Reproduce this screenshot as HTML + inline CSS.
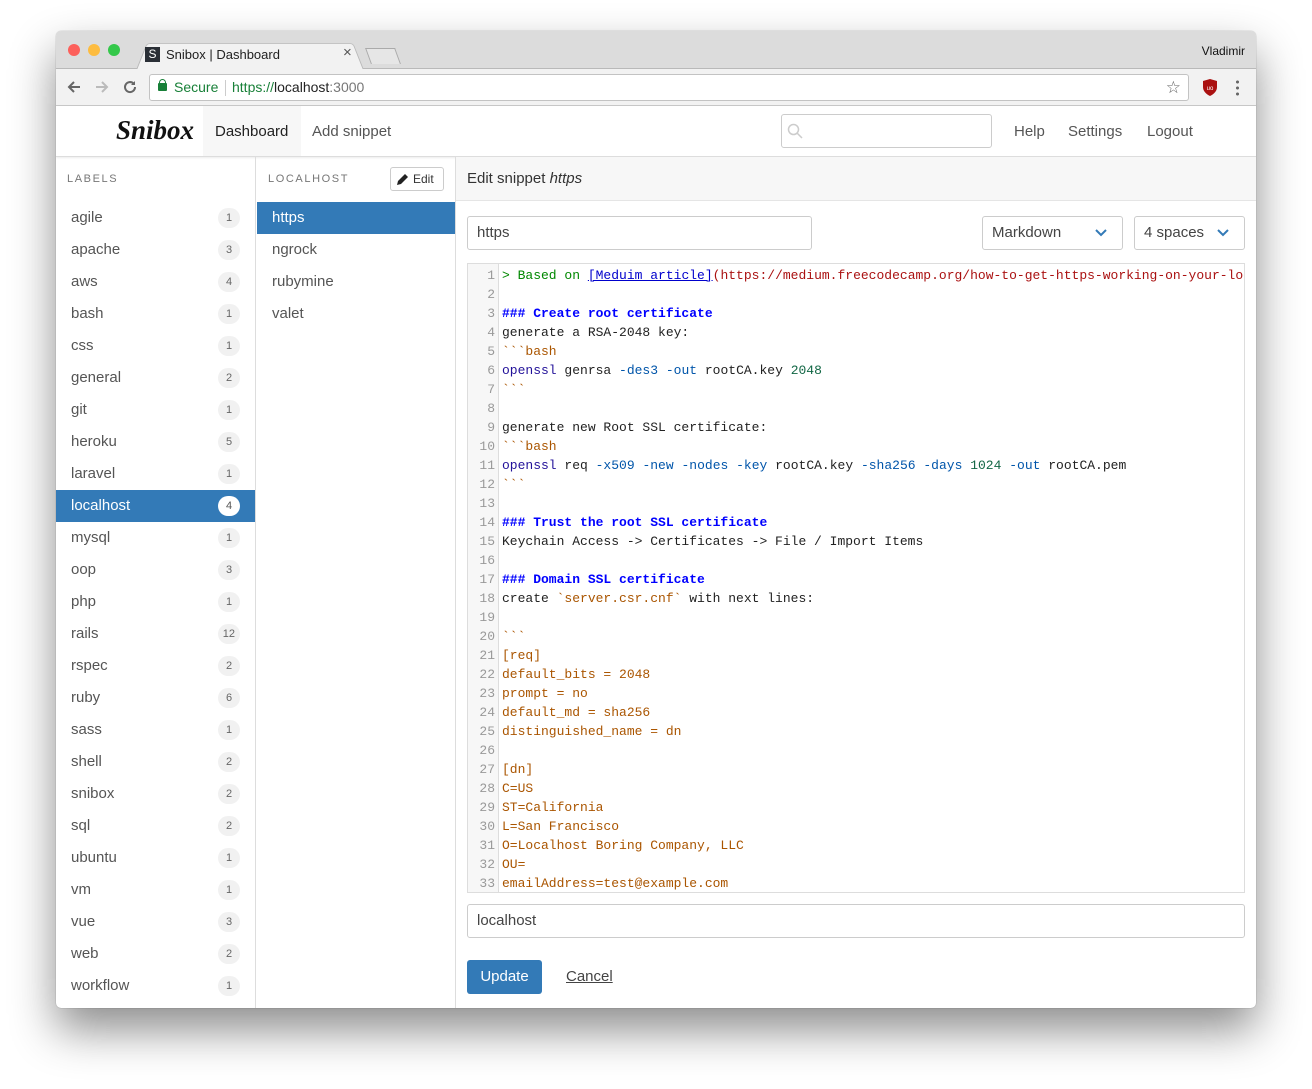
<!DOCTYPE html>
<html><head><meta charset="utf-8">
<style>
*{box-sizing:border-box;margin:0;padding:0}
body{width:1312px;height:1089px;background:#fff;font-family:"Liberation Sans",sans-serif;position:relative;overflow:hidden}
.win{position:absolute;left:56px;top:31px;width:1200px;height:977px;border-radius:5px;overflow:hidden;box-shadow:0 22px 45px rgba(0,0,0,.45),0 0 1px rgba(0,0,0,.4);background:#fff}
.tabbar{position:absolute;left:0;top:0;width:1200px;height:38px;background:#dcdcdc;border-bottom:1px solid #b9b9b9}
.dot{position:absolute;top:13px;width:12px;height:12px;border-radius:50%}
.tab{position:absolute;left:80px;top:9px;width:228px;height:30px;background:#f2f2f2;border:1px solid #b9b9b9;border-bottom:none;border-radius:4px 4px 0 0;transform:perspective(30px) rotateX(6deg);transform-origin:bottom}
.toolbar{position:absolute;left:0;top:38px;width:1200px;height:37px;background:#f2f2f2;border-bottom:1px solid #c8c8c8}
.url{position:absolute;left:93px;top:5px;width:1040px;height:27px;background:#fff;border:1px solid #c3c3c3;border-radius:3px;font-size:14px;line-height:25px}
.nav{position:absolute;left:0;top:75px;width:1200px;height:51px;background:#fff;border-bottom:1px solid #ddd;box-shadow:0 1px 2px rgba(0,0,0,.08)}
.nav a{position:absolute;top:0;line-height:51px;font-size:15px;color:#555;text-decoration:none}
.col1{position:absolute;left:0;top:126px;width:200px;height:851px;border-right:1px solid #ddd}
.col2{position:absolute;left:201px;top:126px;width:199px;height:851px;border-right:1px solid #ddd}
.col3{position:absolute;left:400px;top:126px;width:800px;height:851px}
.hdr{height:45px;font-size:11px;letter-spacing:1.6px;color:#777;line-height:45px;padding-left:11px}
.lab{height:32px;line-height:32px;font-size:15px;color:#555;padding-left:15px;position:relative}
.lab b{position:absolute;right:15px;top:6px;min-width:22px;height:20px;border-radius:10px;background:#f1f1f1;font-weight:normal;font-size:11px;color:#666;text-align:center;line-height:20px;padding:0 5px}
.lab.act{background:#337ab7;color:#fff}
.lab.act b{background:#fff;color:#555}
.sn{height:32px;line-height:32px;font-size:15px;color:#555;padding-left:15px}
.sn.act{background:#337ab7;color:#fff}
.inp{position:absolute;border:1px solid #ccc;border-radius:3px;font-size:15px;color:#444;line-height:32px;padding-left:9px;background:#fff}
.code{position:absolute;left:11px;top:106px;width:778px;height:630px;border:1px solid #ddd;overflow:hidden;background:#fff}
.gut{position:absolute;left:0;top:0;width:31px;height:100%;background:#f7f7f7;border-right:1px solid #ddd}
pre{font-family:"Liberation Mono",monospace;font-size:13px;line-height:19px;position:absolute;top:2px;color:#222;white-space:pre}
.ln{left:0;width:27px;text-align:right;color:#999}
.tx{left:34px}
.q{color:#080}.lk{color:#00c;text-decoration:underline}.ur{color:#a11}.h{color:#00f;font-weight:bold}.s{color:#a50}.k{color:#219}.n{color:#164}.v{color:#05a}
</style></head><body>
<div class="win">
 <div class="tabbar">
  <div class="dot" style="left:12px;background:#fc605b"></div>
  <div class="dot" style="left:32px;background:#fdbc40"></div>
  <div class="dot" style="left:52px;background:#34c84a"></div>
  <div class="tab"></div>
  <div style="position:absolute;left:89px;top:16px;width:15px;height:15px;background:#2a2f36;color:#fff;font-size:12px;line-height:15px;text-align:center">S</div>
  <div style="position:absolute;left:110px;top:16px;font-size:13px;color:#222">Snibox | Dashboard</div>
  <div style="position:absolute;left:287px;top:13px;font-size:15px;color:#555">×</div>
  <div style="position:absolute;left:312px;top:17px;width:30px;height:16px;border:1px solid #aaa;background:#e6e6e6;transform:skewX(20deg);border-bottom:none"></div>
  <div style="position:absolute;right:11px;top:13px;font-size:12px;color:#111">Vladimir</div>
 </div>
 <div class="toolbar">
  <svg style="position:absolute;left:10px;top:10px" width="16" height="16" viewBox="0 0 16 16"><path d="M14 8H3M8 3L3 8l5 5" stroke="#666" stroke-width="2" fill="none"/></svg>
  <svg style="position:absolute;left:38px;top:10px" width="16" height="16" viewBox="0 0 16 16"><path d="M2 8h11M8 3l5 5-5 5" stroke="#bbb" stroke-width="2" fill="none"/></svg>
  <svg style="position:absolute;left:66px;top:10px" width="16" height="16" viewBox="0 0 16 16"><path d="M13 8a5 5 0 1 1-1.5-3.5" stroke="#666" stroke-width="2" fill="none"/><path d="M13 2v4h-4z" fill="#666"/></svg>
  <div class="url">
   <div style="position:absolute;left:8px;top:8px;width:9px;height:8px;background:#188038;border-radius:1px"></div>
   <div style="position:absolute;left:9px;top:4px;width:7px;height:7px;border:1.5px solid #188038;border-radius:4px 4px 0 0"></div>
   <span style="position:absolute;left:24px;color:#188038">Secure</span>
   <span style="position:absolute;left:75px;top:5px;height:16px;border-left:1px solid #ccc"></span>
   <span style="position:absolute;left:82px"><span style="color:#188038">https://</span><span style="color:#222">localhost</span><span style="color:#777">:3000</span></span>
   <span style="position:absolute;right:7px;top:0;color:#666;font-size:17px">☆</span>
  </div>
  <svg style="position:absolute;left:1146px;top:10px" width="16" height="17" viewBox="0 0 16 17"><path d="M1 2l7-2 7 2v6c0 4-3 7-7 9-4-2-7-5-7-9z" fill="#a11"/><text x="8" y="11" font-size="6" fill="#fff" text-anchor="middle" font-family="Liberation Sans">uo</text></svg>
  <div style="position:absolute;left:1180px;top:10px;width:3px;height:17px;background:radial-gradient(circle,#666 1.4px,transparent 1.6px) 0 0/3px 6px"></div>
 </div>
 <div class="nav">
  <div style="position:absolute;left:60px;top:9px;font-family:'Liberation Serif',serif;font-style:italic;font-weight:bold;font-size:27px;color:#111">Snibox</div>
  <div style="position:absolute;left:147px;top:0;width:98px;height:50px;background:#f7f7f7"></div>
  <a style="left:159px;color:#222">Dashboard</a>
  <a style="left:256px">Add snippet</a>
  <div style="position:absolute;left:725px;top:8px;width:211px;height:34px;border:1px solid #ccc;border-radius:3px"></div>
  <svg style="position:absolute;left:731px;top:17px" width="16" height="16" viewBox="0 0 16 16"><circle cx="6.5" cy="6.5" r="5" stroke="#ccc" stroke-width="1.5" fill="none"/><path d="M10 10l5 5" stroke="#ccc" stroke-width="1.5"/></svg>
  <a style="left:958px">Help</a>
  <a style="left:1012px">Settings</a>
  <a style="left:1091px">Logout</a>
 </div>
 <div class="col1">
  <div class="hdr" style="height:45px">LABELS</div>
  <div class="lab">agile<b>1</b></div><div class="lab">apache<b>3</b></div><div class="lab">aws<b>4</b></div><div class="lab">bash<b>1</b></div><div class="lab">css<b>1</b></div><div class="lab">general<b>2</b></div><div class="lab">git<b>1</b></div><div class="lab">heroku<b>5</b></div><div class="lab">laravel<b>1</b></div><div class="lab act">localhost<b>4</b></div><div class="lab">mysql<b>1</b></div><div class="lab">oop<b>3</b></div><div class="lab">php<b>1</b></div><div class="lab">rails<b>12</b></div><div class="lab">rspec<b>2</b></div><div class="lab">ruby<b>6</b></div><div class="lab">sass<b>1</b></div><div class="lab">shell<b>2</b></div><div class="lab">snibox<b>2</b></div><div class="lab">sql<b>2</b></div><div class="lab">ubuntu<b>1</b></div><div class="lab">vm<b>1</b></div><div class="lab">vue<b>3</b></div><div class="lab">web<b>2</b></div><div class="lab">workflow<b>1</b></div><div class="lab"><b> </b></div>
 </div>
 <div class="col2">
  <div class="hdr">LOCALHOST</div>
  <div style="position:absolute;left:133px;top:10px;width:54px;height:24px;border:1px solid #ccc;border-radius:3px;font-size:12px;color:#333;line-height:22px;padding-left:22px">Edit
   <svg style="position:absolute;left:5px;top:4px" width="14" height="14" viewBox="0 0 14 14"><path d="M1 13l1-4 7-7 3 3-7 7z" fill="#222"/></svg></div>
  <div class="sn act">https</div><div class="sn">ngrock</div><div class="sn">rubymine</div><div class="sn">valet</div>
 </div>
 <div class="col3">
  <div style="height:44px;background:#f7f7f7;border-bottom:1px solid #e5e5e5;font-size:15px;color:#333;line-height:44px;padding-left:11px">Edit snippet <i>https</i></div>
  <div class="inp" style="left:11px;top:59px;width:345px;height:34px">https</div>
  <div class="inp" style="left:526px;top:59px;width:141px;height:34px">Markdown<svg style="position:absolute;right:15px;top:12px" width="12" height="8" viewBox="0 0 12 8"><path d="M1 1l5 5 5-5" stroke="#337ab7" stroke-width="2" fill="none"/></svg></div>
  <div class="inp" style="left:678px;top:59px;width:111px;height:34px">4 spaces<svg style="position:absolute;right:15px;top:12px" width="12" height="8" viewBox="0 0 12 8"><path d="M1 1l5 5 5-5" stroke="#337ab7" stroke-width="2" fill="none"/></svg></div>
  <div class="code"><div class="gut"></div>
<pre class="ln">1
2
3
4
5
6
7
8
9
10
11
12
13
14
15
16
17
18
19
20
21
22
23
24
25
26
27
28
29
30
31
32
33</pre>
<pre class="tx"><span class="q">&gt; Based on </span><span class="lk">[Meduim article]</span><span class="ur">(https://medium.freecodecamp.org/how-to-get-https-working-on-your-local</span>

<span class="h">### Create root certificate</span>
generate a RSA-2048 key:
<span class="s">&#96;&#96;&#96;bash</span>
<span class="k">openssl</span> genrsa <span class="v">-des3</span> <span class="v">-out</span> rootCA.key <span class="n">2048</span>
<span class="s">&#96;&#96;&#96;</span>

generate new Root SSL certificate:
<span class="s">&#96;&#96;&#96;bash</span>
<span class="k">openssl</span> req <span class="v">-x509</span> <span class="v">-new</span> <span class="v">-nodes</span> <span class="v">-key</span> rootCA.key <span class="v">-sha256</span> <span class="v">-days</span> <span class="n">1024</span> <span class="v">-out</span> rootCA.pem
<span class="s">&#96;&#96;&#96;</span>

<span class="h">### Trust the root SSL certificate</span>
Keychain Access -&gt; Certificates -&gt; File / Import Items

<span class="h">### Domain SSL certificate</span>
create <span class="s">&#96;server.csr.cnf&#96;</span> with next lines:

<span class="s">&#96;&#96;&#96;
[req]
default_bits = 2048
prompt = no
default_md = sha256
distinguished_name = dn

[dn]
C=US
ST=California
L=San Francisco
O=Localhost Boring Company, LLC
OU=
emailAddress=test@example.com</span></pre>
  </div>
  <div class="inp" style="left:11px;top:747px;width:778px;height:34px">localhost</div>
  <div style="position:absolute;left:11px;top:803px;width:75px;height:34px;background:#337ab7;border-radius:3px;color:#fff;font-size:15px;text-align:center;line-height:34px">Update</div>
  <div style="position:absolute;left:110px;top:803px;font-size:15px;color:#444;line-height:34px;text-decoration:underline">Cancel</div>
 </div>
</div>
</body></html>
